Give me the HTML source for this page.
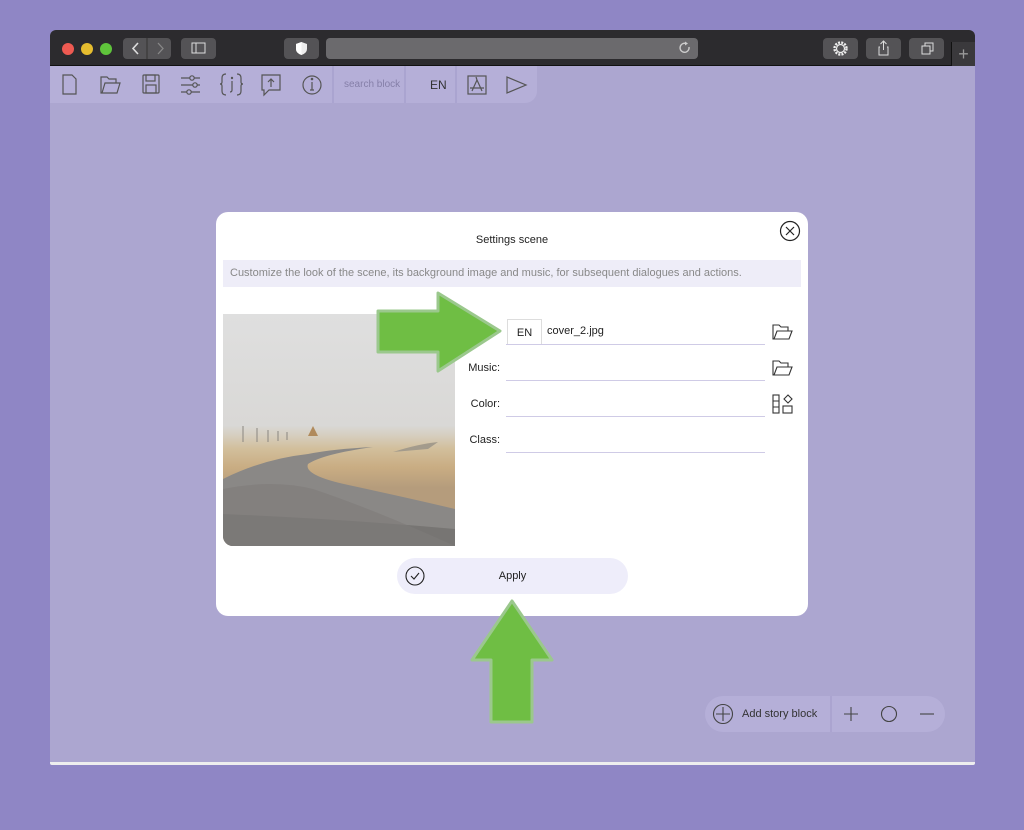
<!DOCTYPE html><html><head><style>
*{margin:0;padding:0;box-sizing:border-box}
body{width:1024px;height:830px;background:#8f86c5;font-family:"Liberation Sans",sans-serif;position:relative;overflow:hidden}
.win{position:absolute;left:50px;top:30px;width:925px;height:735px;background:#aca6d0;border-radius:6px 6px 2px 2px;overflow:hidden;border-bottom:3px solid #eee}
.tb{position:absolute;left:0;top:0;width:925px;height:36px;background:#2c2b2e;border-bottom:1px solid #111}
.dot{position:absolute;top:13px;width:12px;height:12px;border-radius:50%}
.btn{position:absolute;top:8px;height:21px;background:#545356;border-radius:4px}
.ab{position:absolute;color:#333;font-size:12px}
.tool{position:absolute;left:0;top:36px;width:487px;height:37px;background:#b5afd8;border-bottom-right-radius:12px}
.modal{position:absolute;left:216px;top:212px;width:592px;height:404px;background:#fff;border-radius:12px}
.lbl{position:absolute;font-size:12px;color:#222;text-align:right;width:50px}
.line{position:absolute;left:290px;width:259px;border-bottom:1px solid #cfcbe6}
</style></head><body>
<div class="win">
<div class="tb">
<div class="dot" style="left:12px;background:#ee5a52"></div>
<div class="dot" style="left:31px;background:#e6bd2f"></div>
<div class="dot" style="left:50px;background:#5fc43b"></div>
<div class="btn" style="left:73px;width:48px"></div>
<svg style="position:absolute;left:73px;top:8px" width="48" height="21"><path d="M15 5 L10 10.5 L15 16" stroke="#ddd" stroke-width="1.6" fill="none"/><path d="M35 5 L40 10.5 L35 16" stroke="#888" stroke-width="1.3" fill="none"/><line x1="24" y1="0" x2="24" y2="21" stroke="#333"/></svg>
<div class="btn" style="left:131px;width:35px"></div>
<svg style="position:absolute;left:131px;top:8px" width="35" height="21"><rect x="11" y="5" width="13" height="10" stroke="#ddd" fill="none"/><line x1="15" y1="5" x2="15" y2="15" stroke="#ddd"/></svg>
<div class="btn" style="left:234px;width:35px"></div>
<svg style="position:absolute;left:234px;top:8px" width="35" height="21"><path d="M17.5 4 L23 6 V11 Q23 15 17.5 17 Q12 15 12 11 V6 Z" fill="#eee"/><path d="M17.5 4 V17 Q12 15 12 11 V6Z" fill="#fff"/></svg>
<div class="btn" style="left:276px;width:372px;background:#6b6a6d"></div>
<svg style="position:absolute;left:628px;top:11px" width="14" height="14"><path d="M11 6 A4.5 4.5 0 1 1 8 2.5" stroke="#ccc" stroke-width="1.4" fill="none"/><path d="M7 0.5 L10 2.5 L7 4.5Z" fill="#ccc"/></svg>
<div class="btn" style="left:773px;width:35px"></div>
<svg style="position:absolute;left:781px;top:9px" width="19" height="19"><circle cx="9.5" cy="9.5" r="6" stroke="#eee" stroke-width="2.4" fill="none" stroke-dasharray="2 1.2"/><circle cx="9.5" cy="9.5" r="4" stroke="#eee" stroke-width="1.2" fill="none"/></svg>
<div class="btn" style="left:816px;width:35px"></div>
<svg style="position:absolute;left:816px;top:8px" width="35" height="21"><path d="M14 9 H13 V17 H22 V9 H21" stroke="#ddd" fill="none"/><path d="M17.5 3 V12 M14.5 6 L17.5 3 L20.5 6" stroke="#ddd" fill="none"/></svg>
<div class="btn" style="left:859px;width:35px"></div>
<svg style="position:absolute;left:859px;top:8px" width="35" height="21"><rect x="13" y="8" width="8" height="8" stroke="#ddd" fill="none"/><path d="M16 8 V5 H24 V13 H21" stroke="#ddd" fill="none"/></svg>
<div style="position:absolute;left:901px;top:12px;width:24px;height:24px;background:#3a393c;border-left:1px solid #111;color:#999;font-size:18px;text-align:center;line-height:24px">+</div>
</div>
<div class="tool">
<svg width="487" height="37" style="position:absolute;left:0;top:0" stroke="#555" fill="none" stroke-width="1.2">
<path d="M13 9 H22 L26 13 V28 H13 Z"/>
<path d="M51 14 V27 H67 L70 17 H55 L52 27 M51 14 V11 H57 L59 13 H66 V17"/>
<rect x="93" y="9" width="16" height="18" rx="1"/><rect x="96" y="9" width="9" height="6"/><rect x="96" y="19" width="10" height="8"/>
<path d="M131 12 H150 M131 19 H150 M131 26 H150"/><circle cx="142" cy="12" r="2.2" fill="#b5afd8"/><circle cx="145" cy="19" r="2.2" fill="#b5afd8"/><circle cx="139" cy="26" r="2.2" fill="#b5afd8"/>
<path d="M176 8 Q172 8 172 12 V16 Q172 18 170 18 Q172 18 172 20 V25 Q172 29 176 29 M187 8 Q191 8 191 12 V16 Q191 18 193 18 Q191 18 191 20 V25 Q191 29 187 29"/><path d="M182 15 V24 Q182 26 180 26"/><circle cx="182" cy="12" r="0.6" fill="#555"/>
<path d="M212 9 H230 V24 H219 L214 29 V24 H212 Z"/><path d="M221 21 V13 M218 16 L221 13 L224 16"/>
<circle cx="262" cy="19" r="9"/><path d="M262 16 V24 M260 24 H264"/><circle cx="262" cy="13" r="0.7" fill="#555"/>
<path d="M283 0 V37 M355 0 V37 M406 0 V37" stroke="#a39dca"/>
<rect x="418" y="10" width="18" height="18"/><path d="M422 25 L427 14 L432 25 M420 22 H434 M427 14 L426 11"/>
<path d="M457 11 L476 19 L457 27 Z"/>
</svg>
<div style="position:absolute;left:294px;top:13px;font-size:10px;color:#857fa8">search block</div>
<div style="position:absolute;left:380px;top:12px;font-size:12px;color:#333">EN</div>
</div>
<div style="position:absolute;left:655px;top:666px;width:240px;height:36px;background:#b5afd8;border-radius:18px"></div>
<svg style="position:absolute;left:655px;top:666px" width="240" height="36" stroke="#444" fill="none" stroke-width="1.1">
<circle cx="18" cy="18" r="9.5"/><path d="M18 11 V25 M11 18 H25"/>
<path d="M126 0 V36" stroke="#a39dca"/>
<path d="M146 11 V25 M139 18 H153"/><circle cx="184" cy="18" r="7.5"/><path d="M215 18 H229"/>
</svg>
<div class="ab" style="left:692px;top:678px;font-size:11px">Add story block</div>
</div>
<div class="modal">
<div style="position:absolute;left:0;width:592px;top:22px;text-align:center;font-size:11px;color:#222">Settings scene</div>
<svg style="position:absolute;left:563px;top:8px" width="22" height="22" stroke="#222" fill="none" stroke-width="1.2"><circle cx="11" cy="11" r="9.5"/><path d="M7 7 L15 15 M15 7 L7 15"/></svg>
<div style="position:absolute;left:7px;top:48px;width:578px;height:27px;background:#eeedf8;font-size:11px;color:#888;padding:7px 7px">Customize the look of the scene, its background image and music, for subsequent dialogues and actions.</div>
<div style="position:absolute;left:7px;top:102px;width:232px;height:232px;border-radius:0 0 0 10px;overflow:hidden;background:linear-gradient(#dfdfdf 0%,#d9d8d6 48%,#d6cfc1 52%,#d2bf9c 58%,#c9ad83 66%,#b59c7c 75%)">
<svg width="232" height="232" style="position:absolute;left:0;top:0">
<path d="M0 165 Q40 145 85 140 Q110 135 150 133 Q100 140 85 150 Q80 162 130 172 Q190 185 232 195 V232 H0Z" fill="#8a8886"/>
<path d="M0 200 Q120 205 232 215 V232 H0Z" fill="#6f6d6b" opacity=".7"/>
<path d="M0 232 V175 Q50 165 90 175 Q150 195 232 232Z" fill="#7e7c7a" opacity=".6"/>
<path d="M20 128 V112 M34 128 V114 M45 128 V116 M55 127 V117 M64 126 V118" stroke="#8a8680" stroke-width="1"/>
<path d="M85 122 L90 112 L95 122Z" fill="#b08a5c"/>
<path d="M170 138 Q195 130 215 128 L205 135Z" fill="#a39b8c"/>
</svg>
</div>
<div style="position:absolute;left:291px;top:107px;width:35px;height:26px;border:1px solid #ddd;border-bottom:none;font-size:11px;color:#222;text-align:center;line-height:26px">EN</div>
<div style="position:absolute;left:331px;top:113px;font-size:11px;color:#222">cover_2.jpg</div>
<div class="line" style="top:132px"></div>
<div class="lbl" style="left:234px;top:150px;font-size:11px">Music:</div><div class="line" style="top:168px"></div>
<div class="lbl" style="left:234px;top:186px;font-size:11px">Color:</div><div class="line" style="top:204px"></div>
<div class="lbl" style="left:234px;top:222px;font-size:11px">Class:</div><div class="line" style="top:240px"></div>
<svg style="position:absolute;left:555px;top:110px" width="25" height="110" stroke="#333" fill="none" stroke-width="1.1">
<path d="M2 5 V17 H18 L21 9 H6 L3 17 M2 5 V3 H8 L10 5 H17 V9"/>
<path d="M2 41 V53 H18 L21 45 H6 L3 53 M2 41 V39 H8 L10 41 H17 V45"/>
<rect x="2" y="73" width="6" height="18"/><path d="M2 79 H8 M2 85 H8"/><path d="M13 77 L17 73 L21 77 L17 81Z"/><rect x="12" y="84" width="9" height="7"/>
</svg>
<div style="position:absolute;left:181px;top:346px;width:231px;height:36px;background:#eeedfa;border-radius:18px"></div>
<svg style="position:absolute;left:189px;top:354px" width="22" height="22" stroke="#222" fill="none" stroke-width="1.1"><circle cx="10" cy="10" r="9"/><path d="M6 10 L9 13 L14 7"/></svg>
<div style="position:absolute;left:181px;top:358px;width:231px;text-align:center;font-size:11px;color:#222">Apply</div>
</div>
<svg style="position:absolute;left:0;top:0" width="1024" height="830"><path d="M378 311 H438 V293 L500 331 L438 371 V352 H378Z" fill="#6fbe44" stroke="#9bc88d" stroke-width="3" stroke-linejoin="round"/>
<path d="M512 601 L552 660 H532 V722 H491 V660 H472Z" fill="#6fbe44" stroke="#9bc88d" stroke-width="3" stroke-linejoin="round"/></svg>
</body></html>
